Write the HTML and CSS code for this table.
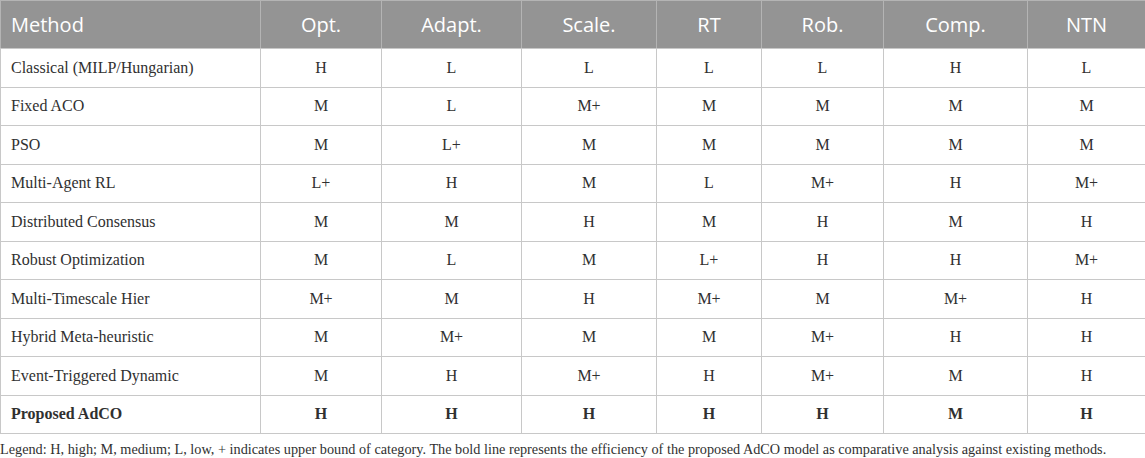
FILE: index.html
```html
<!DOCTYPE html>
<html>
<head>
<meta charset="utf-8">
<link rel="stylesheet" href="styles.css">
</head>
<body>
<table class="cmp">
  <colgroup>
    <col class="c-method">
    <col class="c-opt">
    <col class="c-adapt">
    <col class="c-scale">
    <col class="c-rt">
    <col class="c-rob">
    <col class="c-comp">
    <col class="c-ntn">
  </colgroup>
  <thead>
    <tr>
      <th class="left">Method</th>
      <th>Opt.</th>
      <th>Adapt.</th>
      <th>Scale.</th>
      <th>RT</th>
      <th>Rob.</th>
      <th>Comp.</th>
      <th>NTN</th>
    </tr>
  </thead>
  <tbody>
    <tr><td class="left">Classical (MILP/Hungarian)</td><td>H</td><td>L</td><td>L</td><td>L</td><td>L</td><td>H</td><td>L</td></tr>
    <tr><td class="left">Fixed ACO</td><td>M</td><td>L</td><td>M+</td><td>M</td><td>M</td><td>M</td><td>M</td></tr>
    <tr><td class="left">PSO</td><td>M</td><td>L+</td><td>M</td><td>M</td><td>M</td><td>M</td><td>M</td></tr>
    <tr><td class="left">Multi-Agent RL</td><td>L+</td><td>H</td><td>M</td><td>L</td><td>M+</td><td>H</td><td>M+</td></tr>
    <tr><td class="left">Distributed Consensus</td><td>M</td><td>M</td><td>H</td><td>M</td><td>H</td><td>M</td><td>H</td></tr>
    <tr><td class="left">Robust Optimization</td><td>M</td><td>L</td><td>M</td><td>L+</td><td>H</td><td>H</td><td>M+</td></tr>
    <tr><td class="left">Multi-Timescale Hier</td><td>M+</td><td>M</td><td>H</td><td>M+</td><td>M</td><td>M+</td><td>H</td></tr>
    <tr><td class="left">Hybrid Meta-heuristic</td><td>M</td><td>M+</td><td>M</td><td>M</td><td>M+</td><td>H</td><td>H</td></tr>
    <tr><td class="left">Event-Triggered Dynamic</td><td>M</td><td>H</td><td>M+</td><td>H</td><td>M+</td><td>M</td><td>H</td></tr>
    <tr class="bold"><td class="left">Proposed AdCO</td><td>H</td><td>H</td><td>H</td><td>H</td><td>H</td><td>M</td><td>H</td></tr>
  </tbody>
</table>
<p class="legend">Legend: H, high; M, medium; L, low, + indicates upper bound of category. The bold line represents the efficiency of the proposed AdCO model as comparative analysis against existing methods.</p>
</body>
</html>
```
FILE: styles.css
```css
html, body {
  margin: 0;
  padding: 0;
  background: #ffffff;
}

.cmp {
  width: 1145px;
  border-collapse: collapse;
  table-layout: fixed;
  font-family: "Liberation Serif", "Times New Roman", serif;
  color: #303030;
}

.c-method { width: 260px; }
.c-opt { width: 121px; }
.c-adapt { width: 140px; }
.c-scale { width: 135px; }
.c-rt { width: 105px; }
.c-rob { width: 122px; }
.c-comp { width: 144px; }
.c-ntn { width: 118px; }

.cmp th {
  height: 48px;
  padding: 0 10px;
  background: #949494;
  color: #ffffff;
  font-family: "Open Sans", "Liberation Sans", sans-serif;
  font-weight: 400;
  font-size: 20px;
  text-align: center;
  border: 1px solid #b4b4b4;
  border-bottom-color: #c8c8c8;
  box-sizing: border-box;
}

.cmp td {
  height: 38.5px;
  padding: 0 10px;
  font-size: 16px;
  text-align: center;
  border: 1px solid #c8c8c8;
  box-sizing: border-box;
}

.cmp .left {
  text-align: left;
}

.cmp .bold td {
  font-weight: 700;
}

.legend {
  margin: 7px 0 0 0;
  font-family: "Liberation Serif", "Times New Roman", serif;
  font-size: 14.25px;
  color: #303030;
  white-space: nowrap;
}
```
